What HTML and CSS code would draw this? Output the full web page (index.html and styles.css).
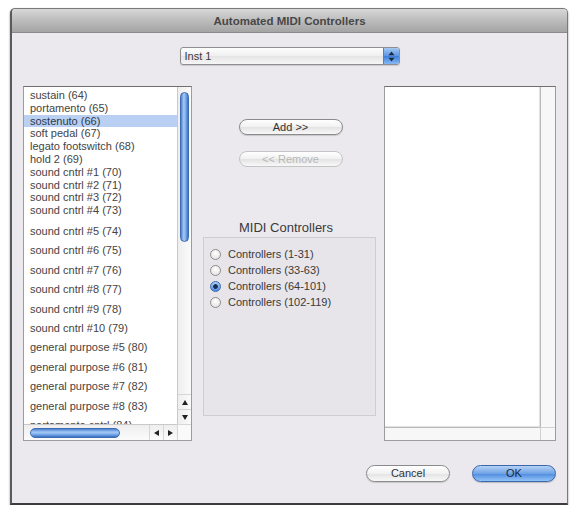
FILE: index.html
```html
<!DOCTYPE html>
<html>
<head>
<meta charset="utf-8">
<title>Automated MIDI Controllers</title>
<link rel="stylesheet" href="styles.css">
</head>
<body>
<div class="window">
  <div class="titlebar">Automated MIDI Controllers</div>
  <div class="content">
    <div class="popup-row">
      <div class="popup">
        <span class="popup-label">Inst 1</span>
        <span class="popup-arrows">
          <svg width="7" height="11" viewBox="0 0 7 11"><path d="M3.5 0.5 L6.5 4.2 H0.5Z M3.5 10.5 L6.5 6.8 H0.5Z" fill="#1f2b40"/></svg>
        </span>
      </div>
    </div>

    <div class="main">
      <div class="listbox list-left">
        <div class="items">
          <div class="item">sustain (64)</div>
          <div class="item">portamento (65)</div>
          <div class="item sel">sostenuto (66)</div>
          <div class="item">soft pedal (67)</div>
          <div class="item">legato footswitch (68)</div>
          <div class="item">hold 2 (69)</div>
          <div class="item">sound cntrl #1 (70)</div>
          <div class="item">sound cntrl #2 (71)</div>
          <div class="item">sound cntrl #3 (72)</div>
          <div class="item">sound cntrl #4 (73)</div>
          <div class="item wide gap">sound cntrl #5 (74)</div>
          <div class="item wide">sound cntrl #6 (75)</div>
          <div class="item wide">sound cntrl #7 (76)</div>
          <div class="item wide">sound cntrl #8 (77)</div>
          <div class="item wide">sound cntrl #9 (78)</div>
          <div class="item wide">sound cntrl #10 (79)</div>
          <div class="item wide">general purpose #5 (80)</div>
          <div class="item wide">general purpose #6 (81)</div>
          <div class="item wide">general purpose #7 (82)</div>
          <div class="item wide">general purpose #8 (83)</div>
          <div class="item wide">portamento cntrl (84)</div>
        </div>
        <div class="vscroll">
          <div class="vthumb"></div>
          <div class="spacer"></div>
          <div class="arrow-box"><svg width="6" height="5" viewBox="0 0 6 5"><path d="M3 0 L6 5 H0Z" fill="#222"/></svg></div>
          <div class="arrow-box"><svg width="6" height="5" viewBox="0 0 6 5"><path d="M0 0 H6 L3 5Z" fill="#222"/></svg></div>
        </div>
        <div class="hscroll">
          <div class="hthumb"></div>
          <div class="spacer"></div>
          <div class="arrow-box h"><svg width="5" height="6" viewBox="0 0 5 6"><path d="M0 3 L5 0 V6Z" fill="#222"/></svg></div>
          <div class="arrow-box h"><svg width="5" height="6" viewBox="0 0 5 6"><path d="M0 0 L5 3 L0 6Z" fill="#222"/></svg></div>
        </div>
        <div class="corner"></div>
      </div>

      <div class="middle">
        <div class="btn add">Add &gt;&gt;</div>
        <div class="btn remove">&lt;&lt; Remove</div>
        <div class="group-label">MIDI Controllers</div>
        <div class="group">
          <div class="radio"><span class="dot"></span>Controllers (1-31)</div>
          <div class="radio"><span class="dot"></span>Controllers (33-63)</div>
          <div class="radio"><span class="dot checked"></span>Controllers (64-101)</div>
          <div class="radio"><span class="dot"></span>Controllers (102-119)</div>
        </div>
      </div>

      <div class="listbox list-right">
        <div class="pane"></div>
        <div class="vtrack"></div>
        <div class="htrack"></div>
        <div class="rcorner"></div>
      </div>
    </div>

    <div class="buttons">
      <div class="pill cancel">Cancel</div>
      <div class="pill ok">OK</div>
    </div>
  </div>
</div>
</body>
</html>
```

FILE: styles.css
```css
* { box-sizing: border-box; }
html, body { margin: 0; padding: 0; background: #fff; }
body { font-family: "Liberation Sans", Arial, sans-serif; color: #333; }

.window {
  margin: 8px 0 0 10px;
  width: 558px;
  height: 497px;
  border: 1px solid #7a7a7a;
  border-left: 2px solid #5a5a5a;
  border-bottom: 2px solid #3c3c3c;
  border-radius: 5px 5px 0 0;
  background: #ebe9ee;
  display: flex;
  flex-direction: column;
  overflow: hidden;
  box-shadow: 0 1px 2px rgba(0,0,0,.5);
}
.titlebar {
  height: 24px;
  flex: none;
  background: linear-gradient(#d8d8d8, #bcbcbc 50%, #a4a4a4);
  border-bottom: 1px solid #8a8a8a;
  text-align: center;
  font-size: 11.5px;
  font-weight: bold;
  line-height: 24px;
  color: #474747;
}
.content {
  flex: 1;
  display: flex;
  flex-direction: column;
  padding: 14px 11px 0 11px;
}
.popup-row { display: flex; justify-content: center; }
.popup {
  width: 220px;
  height: 18px;
  display: flex;
  align-items: stretch;
  border: 1px solid #8f8f8f;
  border-radius: 3px;
  background: linear-gradient(#fdfdfd, #efefef 50%, #e4e4e4 51%, #f6f6f6);
  box-shadow: 0 1px 1px rgba(0,0,0,.15);
  overflow: hidden;
}
.popup-label { flex: 1; padding-left: 4px; font-size: 11px; line-height: 16px; color: #3a3a3a; }
.popup-arrows {
  width: 16px;
  background: linear-gradient(#a4c8f2, #5b95e2 50%, #3f7fd8 51%, #86b9f3);
  border-left: 1px solid #5a7fb5;
  display: flex;
  align-items: center;
  justify-content: center;
}

.main { margin-top: 21px; height: 355px; display: flex; }

.listbox {
  display: grid;
  background: #fff;
  border: 1px solid #9c9c9c;
  border-top-color: #707070;
}
.list-left { width: 169px; grid-template-columns: 1fr 14px; grid-template-rows: 1fr 16px; }
.items { overflow: hidden; padding-top: 2px; font-size: 11px; color: #444; }
.item { padding-left: 6px; line-height: 12.8px; white-space: nowrap; }
.item.wide { line-height: 19.4px; }
.item.gap { margin-top: 5px; }
.item.sel { background: #b9d0f2; color: #2d3850; }

.vscroll {
  border-left: 1px solid #c9c9c9;
  background: linear-gradient(to right, #eeeeee, #fbfbfb);
  display: flex;
  flex-direction: column;
  align-items: center;
}
.vthumb {
  margin-top: 5px;
  width: 9px;
  height: 150px;
  border-radius: 5px;
  background: linear-gradient(to right, #4a80d4, #a7caf4 40%, #7eaeec 65%, #3a6fc4);
  border: 1px solid #3e6cb2;
}
.spacer { flex: 1; }
.arrow-box { width: 13px; height: 15px; display: flex; align-items: center; justify-content: center; border-top: 1px solid #d6d6d6; }
.hscroll {
  border-top: 1px solid #c9c9c9;
  background: linear-gradient(#eeeeee, #fbfbfb);
  display: flex;
  align-items: center;
}
.hthumb {
  margin-left: 6px;
  width: 90px;
  height: 10px;
  border-radius: 5px;
  background: linear-gradient(#4a80d4, #a7caf4 40%, #7eaeec 65%, #3a6fc4);
  border: 1px solid #3e6cb2;
}
.arrow-box.h { width: 14px; height: 15px; border-top: none; border-left: 1px solid #d6d6d6; }
.corner { background: #fafafa; border-left: 1px solid #d6d6d6; border-top: 1px solid #d6d6d6; }

.middle {
  width: 175px;
  margin: 0 6px 0 11px;
  display: flex;
  flex-direction: column;
  align-items: center;
}
.btn {
  width: 104px;
  height: 16px;
  border-radius: 8px;
  border: 1px solid #8a8a8a;
  font-size: 11px;
  line-height: 14px;
  text-align: center;
  background: linear-gradient(#ffffff, #f1f1f1 50%, #e3e3e3 51%, #f8f8f8);
  box-shadow: 0 1px 1px rgba(0,0,0,.15);
}
.add { margin-top: 33px; color: #333; }
.remove { margin-top: 16px; color: #b8b8b8; border-color: #c4c4c4; box-shadow: none; }
.group-label {
  margin-top: 53px;
  align-self: stretch;
  padding-right: 9px;
  text-align: center;
  font-size: 13px;
  line-height: 15px;
  color: #3a3a3a;
}
.group {
  margin-top: 2px;
  align-self: flex-start;
  width: 173px;
  height: 179px;
  border: 1px solid #cfcdd2;
  background: #e7e5ea;
  padding: 8px 0 0 6px;
}
.radio {
  display: flex;
  align-items: center;
  gap: 7px;
  height: 16px;
  font-size: 11px;
  color: #3a3a3a;
  white-space: nowrap;
}
.dot {
  width: 11px;
  height: 11px;
  border-radius: 50%;
  border: 1px solid #8c8c8c;
  background: radial-gradient(circle at 50% 35%, #ffffff, #dedede);
  flex: none;
}
.dot.checked {
  border-color: #3a68ae;
  background: radial-gradient(circle, #17305a 0 2px, transparent 2.6px), linear-gradient(#b1cff2, #4f8ade);
}

.list-right { width: 172px; grid-template-columns: 1fr 15px; grid-template-rows: 1fr 13px; }
.pane { background: #fff; box-shadow: inset -1px -1px 1px rgba(0,0,0,.12); }
.vtrack { background: #f7f7f8; border-left: 1px solid #b9b9b9; }
.htrack { background: #f7f7f8; border-top: 1px solid #b9b9b9; }
.rcorner { background: #f7f7f8; border-left: 1px solid #d0d0d0; border-top: 1px solid #d0d0d0; }

.buttons { margin-top: 24px; display: flex; justify-content: flex-end; gap: 22px; }
.pill {
  width: 84px;
  height: 17px;
  border-radius: 9px;
  font-size: 11px;
  line-height: 15px;
  text-align: center;
}
.cancel {
  border: 1px solid #8a8a8a;
  background: linear-gradient(#ffffff, #f1f1f1 50%, #e3e3e3 51%, #f8f8f8);
  color: #333;
  box-shadow: 0 1px 1px rgba(0,0,0,.15);
}
.ok {
  border: 1px solid #3b68ad;
  background: linear-gradient(#b5d2f4, #6fa3e6 50%, #4d8ae0 51%, #93c3f6);
  color: #1c2740;
  box-shadow: 0 1px 1px rgba(0,0,0,.2);
}
```
